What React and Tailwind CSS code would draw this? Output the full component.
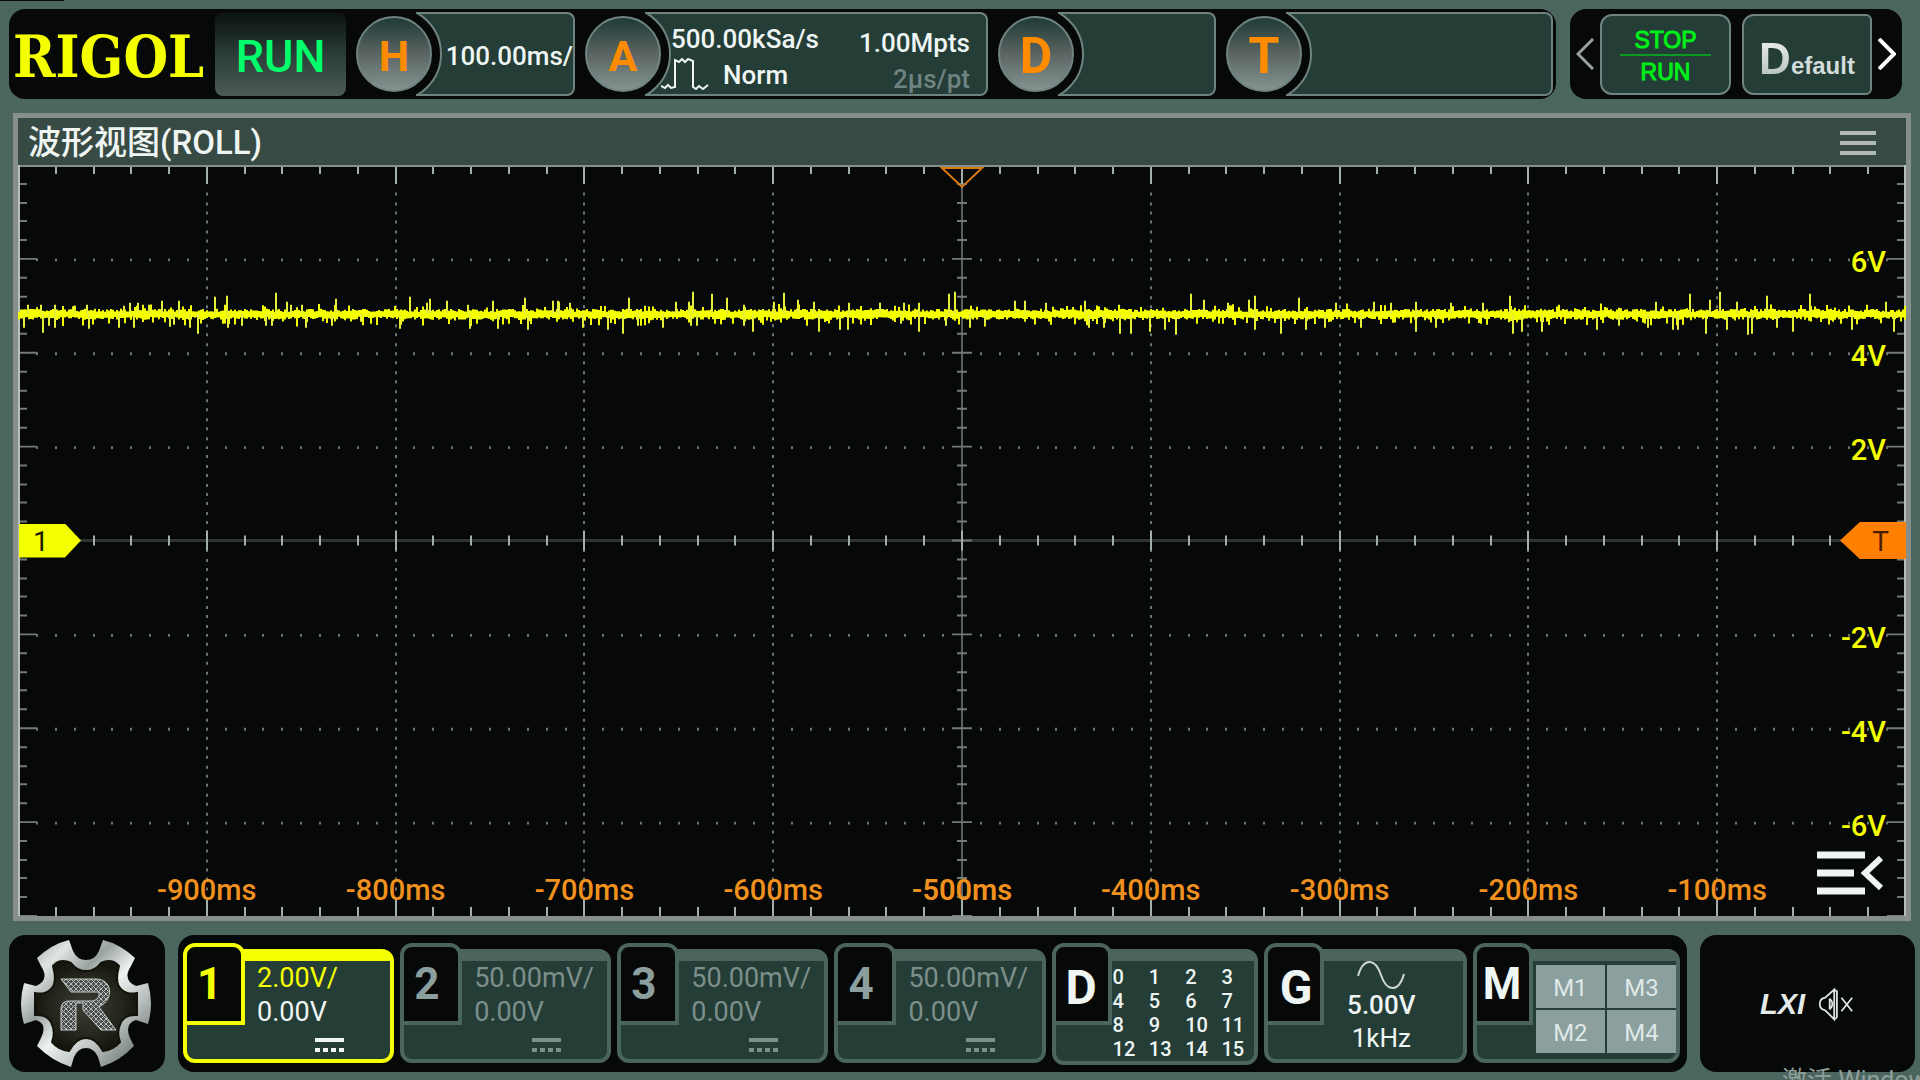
import React from "react";

const channels = [
  { id: 1, scale: "2.00V/", offset: "0.00V", active: true },
  { id: 2, scale: "50.00mV/", offset: "0.00V", active: false },
  { id: 3, scale: "50.00mV/", offset: "0.00V", active: false },
  { id: 4, scale: "50.00mV/", offset: "0.00V", active: false },
];

const digitalLines = [...Array(16).keys()];
const mathChannels = ["M1", "M3", "M2", "M4"];

const timeLabels = ["-900ms", "-800ms", "-700ms", "-600ms", "-500ms", "-400ms", "-300ms", "-200ms", "-100ms"];
const voltLabels = ["6V", "4V", "2V", "", "-2V", "-4V", "-6V"];

/* -------------------- PLOT GEOMETRY -------------------- */

const PLOT_W = 1888;
const PLOT_H = 752;
const DIV_X = PLOT_W / 10;
const DIV_Y = PLOT_H / 8;
const TRACE_Y = 149;

// [x, height], positive goes up
const spikes = [
  [6, -14], [10, 9], [23, 9], [25, -19], [31, -12], [37, 9], [37, -14], [56, 8], [69, 9], [71, -15],
  [101, -14], [106, 8], [112, 11], [116, -14], [120, 11], [131, 9], [144, 13], [152, -13], [156, -11],
  [161, 13], [172, -14], [180, -20], [197, 17], [209, 18], [210, -14], [224, -12], [248, -12], [254, -12],
  [258, 21], [269, 12], [273, 9], [284, 9], [288, -14], [314, -12], [318, 15], [343, -8], [382, -15],
  [392, 17], [409, 11], [412, 15], [429, 13], [450, 9], [452, -15], [475, 13], [480, -15], [507, 16],
  [510, -16], [535, 13], [540, 13], [541, 12], [552, 11], [565, -14], [590, -16], [605, -20], [611, 16],
  [620, -12], [645, -14], [658, 12], [671, 12], [673, -12], [675, 22], [679, -12], [694, 20], [709, 16],
  [726, -12], [726, 9], [735, -18], [756, 12], [766, 21], [780, 14], [796, 12], [801, -18], [822, -16],
  [830, -16], [831, 11], [862, 11], [886, 11], [883, -10], [901, 11], [901, -18], [928, -12], [931, 20],
  [937, 22], [952, -14], [967, -12], [997, 13], [1007, 13], [1028, 11], [1067, 13], [1071, -14],
  [1086, -14], [1102, -20], [1113, -20], [1132, -18], [1147, -16], [1158, -21], [1173, 20], [1186, 14],
  [1210, 11], [1231, 14], [1237, 18], [1237, -16], [1263, -20], [1281, 16], [1288, -16], [1307, -14],
  [1318, 11], [1343, -14], [1356, 12], [1373, 11], [1398, 12], [1398, -18], [1418, -14], [1433, 11],
  [1465, 11], [1492, 18], [1495, -20], [1504, -18], [1524, -18], [1579, -16], [1601, -12], [1630, -14],
  [1638, 12], [1655, -16], [1660, -16], [1672, 20], [1688, -20], [1692, 14], [1702, 22], [1709, -16],
  [1719, 12], [1730, -21], [1734, -20], [1749, 18], [1759, -14], [1775, -18], [1792, 20], [1834, -16],
  [1868, 12], [1876, -18],
];

const buildNoise = () => {
  let seed = 7;
  const rand = () => {
    seed = (seed * 16807) % 2147483647;
    return seed / 2147483647;
  };

  let d = "";
  for (let x = 1; x < PLOT_W; x += 2) {
    let up = 2 + rand() * 3;
    let down = 3 + rand() * 3;
    if (rand() > 0.86) up += rand() * 6;
    if (rand() > 0.78) down += rand() * 7;
    d += `M${x} ${(TRACE_Y - up).toFixed(1)}V${(TRACE_Y + down).toFixed(1)}`;
  }
  return d;
};

const buildTicks = () => {
  const marks = { x: "", y: "", dots: "" };

  for (let i = 0; i <= 50; i++) {
    const x = Math.round((i * DIV_X) / 5);
    const major = i % 5 === 0;
    const edge = major ? 19 : 9;
    const mid = major ? 10 : 5;
    marks.x += `M${x} 0v${edge}M${x} ${PLOT_H}v${-edge}`;
    if (i > 1) marks.x += `M${x} ${PLOT_H / 2 - mid}v${mid * 2}`;
  }

  for (let i = 0; i <= 40; i++) {
    const y = Math.round((i * DIV_Y) / 5);
    const major = i % 5 === 0;
    const edge = major ? 19 : 9;
    const mid = major ? 10 : 5;
    marks.y += `M0 ${y}h${edge}M${PLOT_W} ${y}h${-edge}M${PLOT_W / 2 - mid} ${y}h${mid * 2}`;
  }

  for (let row = 1; row < 8; row++) {
    if (row === 4) continue;
    for (let i = 1; i < 100; i++) {
      marks.dots += `M${Math.round((i * DIV_X) / 10) - 1} ${row * DIV_Y + 1}h2`;
    }
  }
  for (let col = 1; col < 10; col++) {
    if (col === 5) continue;
    for (let i = 3; i < 78; i++) {
      marks.dots += `M${Math.round(col * DIV_X) - 1} ${Math.round((i * DIV_Y) / 10) + 1}h2`;
    }
  }
  return marks;
};

const noisePath = buildNoise();
const spikePath = spikes.map(([x, h]) => `M${x} ${TRACE_Y}v${-h}`).join("");
const ticks = buildTicks();

/* -------------------- TOP BAR -------------------- */

function Knob({ letter, big }) {
  return (
    <span
      className={`relative z-10 flex size-[76px] shrink-0 items-center justify-center rounded-full border-2 border-[#6f8380] bg-linear-to-b from-[#1f3b36] via-[#5b6563] to-[#849491] pt-1 font-bold leading-none text-[#ff8c00] ${
        big ? "text-[50px]" : "text-[43px]"
      }`}
    >
      {letter}
    </span>
  );
}

function KnobPanel({ letter, big, className, children }) {
  return (
    <button className={`flex items-center ${className}`}>
      <Knob letter={letter} big={big} />
      <span className="relative -ml-4 flex h-[84px] min-w-0 flex-1 overflow-hidden rounded-r-lg border-2 border-l-0 border-[#6f8380] bg-[#243d37] text-[26px] font-medium leading-none text-[#eef5f3]">
        <span className="absolute -left-[70px] -top-2 size-24 rounded-full border-2 border-[#6f8380] bg-[#070808]" />
        {children}
      </span>
    </button>
  );
}

function TopBar() {
  return (
    <header className="flex gap-3.5 pl-[9px] pr-[18px]">
      <div className="flex h-[90px] min-w-0 flex-1 items-center rounded-2xl bg-[#070808] pl-1 pr-[3px]">
        <div className="w-[202px] shrink-0 whitespace-nowrap pt-1 font-['DejaVu_Serif_Condensed','DejaVu_Serif',serif] text-[57px] font-bold leading-none text-[#f4ff00]">
          RIGOL
        </div>
        <button className="mr-2.5 h-[84px] w-[131px] shrink-0 rounded-lg bg-linear-to-b from-[#0b1110] via-[#2b3d38] to-[#4d5c58] pt-1.5 text-[45px] font-medium text-[#00ff6a]">
          RUN
        </button>

        <KnobPanel letter="H" className="mr-2.5 w-[219px] shrink-0">
          <span className="relative flex w-full items-center justify-end pt-1">100.00ms/</span>
        </KnobPanel>

        <KnobPanel letter="A" className="mr-2.5 w-[403px] shrink-0">
          <span className="relative flex w-full justify-between pl-4 pr-4">
            <span className="flex flex-col items-start gap-1.5 pt-3">
              <span className="pl-2.5">500.00kSa/s</span>
              <span className="flex items-center gap-2.5">
                <svg className="h-8 w-[52px]" viewBox="0 0 52 32" fill="none" stroke="#eef5f3" strokeWidth="2">
                  <path d="M0 28l4 2 3-3 3 3 4-1V2l4 2 3-3 3 3 3-3 5 2v26l3 2 3-3 4 3 5-4" />
                </svg>
                <span className="pt-0.5">Norm</span>
              </span>
            </span>
            <span className="flex flex-col items-end gap-2.5 pt-4">
              <span>1.00Mpts</span>
              <span className="text-[#6f8380]">2µs/pt</span>
            </span>
          </span>
        </KnobPanel>

        <KnobPanel letter="D" big className="mr-2.5 w-[218px] shrink-0" />
        <KnobPanel letter="T" big className="min-w-0 flex-1" />
      </div>

      <div className="flex h-[90px] w-[332px] shrink-0 items-center justify-center gap-[5px] rounded-2xl bg-[#070808] font-['Liberation_Sans',sans-serif]">
        <button aria-label="Previous" className="flex w-5 justify-center text-[#9aa09e]">
          <svg className="h-8 w-[18px]" viewBox="0 0 18 32" fill="none" stroke="currentColor" strokeWidth="3">
            <path d="M17 1L2 16l15 15" />
          </svg>
        </button>
        <button className="mr-1.5 flex h-[81px] w-[131px] flex-col items-center justify-center rounded-xl border-2 border-[#6f8380] bg-[#243d37] pt-1 text-[23px] leading-7 text-[#00f018]">
          <span className="border-b-2 border-[#0a9a20] px-3.5 [-webkit-text-stroke:1px_#00f018]">STOP</span>
          <span className="pt-0.5 [-webkit-text-stroke:1px_#00f018]">RUN</span>
        </button>
        <button className="flex h-[81px] w-[130px] items-baseline justify-center rounded-l-xl rounded-r-md border-2 border-[#6f8380] bg-[#243d37] pt-2 font-bold">
          <span className="bg-linear-to-b from-white to-[#9fb0ad] bg-clip-text text-[44px] leading-[70px] text-transparent">D</span>
          <span className="text-2xl text-[#d3dcda]">efault</span>
        </button>
        <button aria-label="Next" className="flex w-5 justify-center text-white">
          <svg className="h-8 w-[18px]" viewBox="0 0 18 32" fill="none" stroke="currentColor" strokeWidth="4">
            <path d="M1 1l15 15L1 31" />
          </svg>
        </button>
      </div>
    </header>
  );
}

/* -------------------- WAVEFORM -------------------- */

function WaveView() {
  return (
    <main className="ml-[13px] mr-[9px] flex flex-1 flex-col border-[5px] border-[#868f8c] bg-[#384a44]">
      <div className="flex h-[47px] items-center justify-between pl-2.5 pr-[30px]">
        <h1 className="pt-0.5 text-[33px] font-medium leading-none text-[#eef5f3]">波形视图(ROLL)</h1>
        <button aria-label="View menu" className="flex flex-col gap-1.5 pt-0.5">
          <span className="h-1 w-9 bg-[#b0b9b6]" />
          <span className="h-1 w-9 bg-[#b0b9b6]" />
          <span className="h-1 w-9 bg-[#b0b9b6]" />
        </button>
      </div>

      <div className="relative min-h-[400px] flex-1 bg-[#070808]">
        <svg
          className="absolute inset-0 h-full w-full"
          viewBox={`0 0 ${PLOT_W} ${PLOT_H}`}
          preserveAspectRatio="none"
          fill="none"
        >
          <path d={ticks.dots} stroke="#6c7472" strokeWidth="3" />
          <path d={`M60 ${PLOT_H / 2}H${PLOT_W}`} stroke="#2e3433" strokeWidth="3" />
          <path d={`M${PLOT_W / 2} 0V${PLOT_H}`} stroke="#5a605e" strokeWidth="2" />
          <path d={ticks.y} stroke="#737b79" strokeWidth="2" />
          <path d={ticks.x} stroke="#a3afac" strokeWidth="2" />
          <path d={`M0 1H${PLOT_W}`} stroke="#868f8c" strokeWidth="2" />
          <path d={`M1 0V${PLOT_H}M${PLOT_W - 1} 0V${PLOT_H}`} stroke="#b3bdba" strokeWidth="2" />
          <path d={noisePath} stroke="#f4ff00" strokeWidth="2" />
          <path d={spikePath} stroke="#e6ee3c" strokeWidth="2" />
          <path d={`M${PLOT_W / 2 - 20} 3h40l-20 19z`} stroke="#d97a10" strokeWidth="2" />
        </svg>

        {/* Time axis */}
        <div className="absolute inset-x-[5%] bottom-2.5 flex text-[29px] font-medium leading-8 text-[#f0901e]">
          {timeLabels.map((label) => (
            <span
              key={label}
              className={`flex-1 basis-0 text-center ${label === "-500ms" ? "font-semibold" : ""}`}
            >
              {label}
            </span>
          ))}
        </div>

        {/* Voltage axis */}
        <div className="absolute inset-y-[6.25%] right-5 flex flex-col text-[29px] font-medium leading-none text-[#f4ff00]">
          {voltLabels.map((label, i) => (
            <span key={i} className="flex flex-1 items-center justify-end pt-2">
              {label}
            </span>
          ))}
        </div>

        {/* Channel 1 and trigger level markers */}
        <div className="absolute inset-y-0 left-px flex items-center">
          <span className="flex h-[34px] w-[62px] items-center bg-[#f4ff00] pl-3.5 pt-0.5 text-[28px] leading-none text-[#1c2000] [clip-path:polygon(0_0,74%_0,100%_50%,74%_100%,0_100%)]">
            1
          </span>
        </div>
        <div className="absolute inset-y-0 right-0 flex items-center">
          <span className="flex h-[37px] w-[66px] items-center justify-end bg-[#ff8000] pr-[17px] pt-0.5 text-[28px] leading-none text-[#4a1c00] [clip-path:polygon(0_50%,30%_0,100%_0,100%_100%,30%_100%)]">
            T
          </span>
        </div>

        <button aria-label="Open side menu" className="absolute bottom-5 right-[22px]">
          <svg className="h-[46px] w-[68px]" viewBox="0 0 68 46" fill="none" stroke="#eef5f3">
            <path d="M1 5h48M1 23h37M1 41h48" strokeWidth="7" />
            <path d="M65 8L49 23l16 15" strokeWidth="6" />
          </svg>
        </button>
      </div>
    </main>
  );
}

/* -------------------- BOTTOM BAR -------------------- */

function GearLogo() {
  return (
    <svg className="mr-0.5 h-32 w-[132px]" viewBox="-66 -64 132 128">
      <defs>
        <linearGradient id="rim" x1="0" y1="0" x2="1" y2="1">
          <stop offset="0" stopColor="#8f9795" />
          <stop offset="0.2" stopColor="#dfe5e3" />
          <stop offset="0.36" stopColor="#9aa3a0" />
          <stop offset="0.52" stopColor="#eef3f1" />
          <stop offset="0.7" stopColor="#b9c1be" />
          <stop offset="0.85" stopColor="#848c89" />
          <stop offset="1" stopColor="#d5dcd9" />
        </linearGradient>
        <radialGradient id="core">
          <stop offset="0" stopColor="#3d3e37" />
          <stop offset="0.7" stopColor="#24251c" />
          <stop offset="1" stopColor="#15160c" />
        </radialGradient>
        <pattern id="mesh" width="5" height="5" patternUnits="userSpaceOnUse">
          <rect width="5" height="5" fill="#4a4d4b" />
          <path d="M0 0l5 5M5 0L0 5" stroke="#b8bebc" strokeWidth="1" />
        </pattern>
      </defs>
      <path
        d="M-17-64L-13-53Q-9-44 0-44T13-53L17-64Q34-60 49-46L45-38Q36-24 50-18L62-21Q68 0 62 20L50 16Q38 20 44 34L48 42Q34 57 15 63L12 53Q8 44 0 44T-12 53L-15 63Q-34 57-49 42L-45 34Q-38 20-50 16L-62 20Q-68 0-62-21L-50-18Q-36-24-45-38L-49-46Q-34-60-17-64Z"
        fill="url(#rim)"
      />
      <path
        d="M-15-41Q-9-33 0-33T15-41Q26-46 33-38Q28-20 36-14Q42-9 51-11V11Q40 10 35 18Q30 28 34 38Q27 46 17 47Q10 34 0 34T-17 47Q-27 46-34 38Q-30 28-35 18Q-40 10-51 11V-11Q-42-9-36-14Q-28-20-33-38Q-26-46-15-41Z"
        fill="url(#core)"
        stroke="#12130a"
        strokeWidth="2"
      />
      <path
        d="M-25-25H10C26-25 29-5 13 3L30 26H15L-3 6V-1H-10V26H-25V5Q-25-3-17-3H7Q14-5 13-12H-15Z"
        fill="url(#mesh)"
        stroke="#c5cbc9"
        strokeWidth="1"
      />
    </svg>
  );
}

function Card({ tab, active, tabClass, className, children }) {
  const border = active ? "border-[#f4ff00]" : "border-[#4b645e]";
  return (
    <button className="grid h-[120px] min-w-0 grid-cols-1 text-left">
      <span
        className={`col-start-1 row-start-1 mt-1.5 flex min-w-0 rounded-xl border-4 border-t-[12px] bg-[#243d37] ${border} ${className}`}
      >
        {children}
      </span>
      <span
        className={`z-10 col-start-1 row-start-1 flex h-[82px] items-center rounded-t-xl border-4 bg-[#070808] font-bold leading-none ${border} ${tabClass}`}
      >
        {tab}
      </span>
    </button>
  );
}

function ChannelCard({ ch }) {
  const text = ch.active ? "text-[#eef5f3]" : "text-[#7d8f8b]";
  return (
    <Card
      tab={ch.id}
      active={ch.active}
      tabClass={`w-[62px] pl-2.5 text-[44px] ${ch.active ? "text-[#f4ff00]" : "text-[#8c9f9f]"}`}
      className={`flex-col pl-[70px] text-[27px] leading-[34px] ${text}`}
    >
      <span className={ch.active ? "text-[#f4ff00]" : ""}>{ch.scale}</span>
      <span>{ch.offset}</span>
      <svg className="ml-[58px] mt-2 h-4 w-[30px]" viewBox="0 0 30 16" stroke="currentColor" strokeWidth="4">
        <path d="M0 3h29" />
        <path d="M0 13h30" strokeDasharray="5 3" />
      </svg>
    </Card>
  );
}

function BottomBar() {
  return (
    <footer className="flex h-[137px] gap-[13px] pl-[9px] pr-[5px]">
      <button aria-label="Main menu" className="flex w-[156px] shrink-0 items-center justify-center rounded-2xl bg-[#070808]">
        <GearLogo />
      </button>

      <div className="grid min-w-0 flex-1 grid-cols-[211fr_211fr_211fr_211fr_206fr_203fr_207fr] gap-1.5 rounded-2xl bg-[#070808] pb-[9px] pl-[5px] pr-[7px] pt-2">
        {channels.map((ch) => (
          <ChannelCard key={ch.id} ch={ch} />
        ))}

        <Card tab="D" tabClass="w-[60px] pl-2.5 pt-2 text-[48px] text-[#eef5f3]" className="pl-[57px]">
          <span className="-mr-1 grid flex-1 grid-cols-4 pt-1 text-xl font-medium leading-6 text-[#eef5f3]">
            {digitalLines.map((n) => (
              <span key={n}>{n}</span>
            ))}
          </span>
        </Card>

        <Card tab="G" tabClass="w-[60px] pl-3 pt-2 text-[48px] text-[#eef5f3]" className="flex-col items-center pl-8 text-[26px] font-medium leading-[33px] text-[#eef5f3]">
          <svg className="h-7 w-12" viewBox="0 0 48 28" fill="none" stroke="#cdd6d3" strokeWidth="2">
            <path d="M1 15C6-3 18-4 24 14s18 17 23-1" />
          </svg>
          <span>5.00V</span>
          <span className="font-normal">1kHz</span>
        </Card>

        <Card tab="M" tabClass="w-[60px] pl-1.5 text-[44px] text-[#eef5f3]" className="pb-1.5 pl-[59px] pt-1">
          <span className="grid flex-1 grid-cols-2 gap-0.5 text-2xl text-[#dfe8e6]">
            {mathChannels.map((name) => (
              <span key={name} className="flex items-center justify-center bg-[#8c9f9f] pt-0.5">
                {name}
              </span>
            ))}
          </span>
        </Card>
      </div>

      <div className="flex w-[215px] shrink-0 items-center justify-center gap-3 rounded-2xl bg-[#070808]">
        <span className="pt-0.5 font-['Liberation_Sans',sans-serif] text-[29px] font-bold italic leading-none text-[#e4ebe9]">LXI</span>
        <svg className="h-9 w-[38px]" viewBox="0 0 38 40" fill="none" stroke="#dfe6e4" strokeWidth="2">
          <path d="M20 5v30M17 4v33L7 27Q1 26 1 20t6-7zM17 4l3 2M17 37l3-2" />
          <path d="M12 14q6 6 0 12M12 14v12" strokeWidth="2" />
          <path d="M25 13l12 15M37 13L25 28" strokeWidth="2" />
        </svg>
      </div>
    </footer>
  );
}

function App() {
  return (
    <div className="relative flex min-h-screen flex-col overflow-hidden bg-[#4b665f] pb-2 pt-[9px] font-[Roboto,'Noto_Sans_CJK_SC',sans-serif]">
      <TopBar />
      <div className="flex flex-1 flex-col py-3.5">
        <WaveView />
      </div>
      <BottomBar />
      <div className="absolute left-0 top-0 h-px w-16 bg-[#070808]" />
      <div className="absolute right-0 top-full -mt-[13px] w-[138px] overflow-hidden whitespace-nowrap text-[25px] leading-7 text-[#8fa09b]">
        激活 Windows
      </div>
    </div>
  );
}

export default App;
